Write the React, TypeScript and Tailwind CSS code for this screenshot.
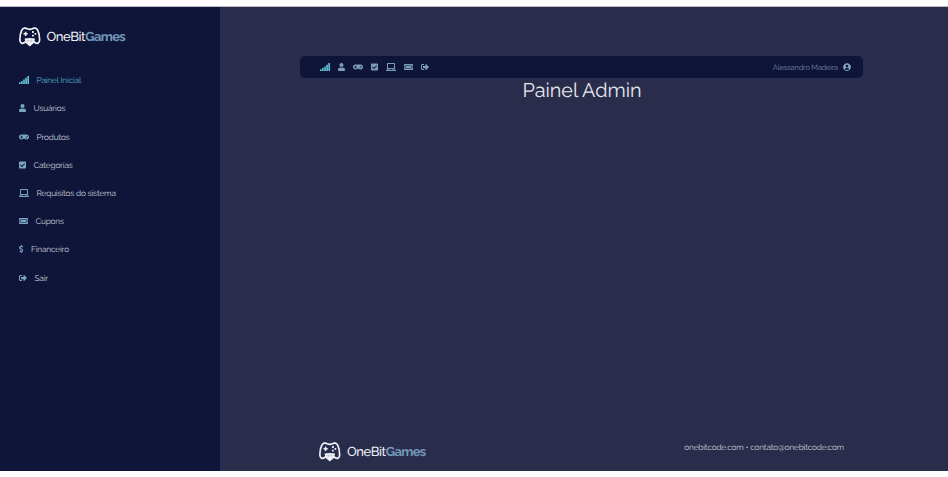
import type { ReactNode } from "react";
import {
  FaUser, FaGamepad, FaCheckSquare, FaLaptop, FaTicketAlt,
  FaDollarSign, FaSignOutAlt, FaUserCircle,
} from "react-icons/fa";

function Signal() {
  return (
    <svg viewBox="0 0 10 8" className="h-2 w-2.5 text-[#62c6d8]" fill="currentColor">
      <path d="M0 6.200h1.600V8H0zM2.100 5h1.600v3H2.100zM4.200 3.400h1.600V8H4.200zM6.300 1.700h1.600V8H6.300zM8.400 0H10v8H8.400z" />
    </svg>
  );
}

const menu: { label: string; icon: ReactNode; text: string }[] = [
  { label: "Painel Inicial", icon: <Signal />, text: "text-[#4fb4c9]" },
  { label: "Usuários", icon: <FaUser className="h-2 w-[7px]" />, text: "text-[#cccedb]" },
  { label: "Produtos", icon: <FaGamepad className="h-2 w-2.5" />, text: "text-[#cccedb]" },
  { label: "Categorias", icon: <FaCheckSquare className="h-2 w-[7px]" />, text: "text-[#cccedb]" },
  { label: "Requisitos do sistema", icon: <FaLaptop className="h-2 w-2.5" />, text: "text-[#cccedb]" },
  { label: "Cupons", icon: <FaTicketAlt className="h-2 w-[9px]" />, text: "text-[#cccedb]" },
  { label: "Financeiro", icon: <FaDollarSign className="h-2 w-[4.5px]" />, text: "text-[#cccedb]" },
  { label: "Sair", icon: <FaSignOutAlt className="h-2 w-2" />, text: "text-[#cccedb]" },
];

function Logo() {
  return (
    <div className="flex items-start gap-[6px]">
      <svg viewBox="0 0 22 20" className="h-5 w-[22px] shrink-0" fill="none">
        <path
          d="M6.800 14.300 5.300 15.800C3.300 17 1 16.300 .9 13.300 .8 9.800 1.400 6 2.700 3.300 3.900.900 6.300.5 8.200 1.800Q11 2.900 13.300 1.800C15.200.5 17.600.900 18.800 3.300 20.100 6 20.700 9.800 20.600 13.300 20.500 16.300 18.200 17 16.200 15.800L14.700 14.300"
          stroke="#f1f2f7" strokeWidth="1.700" strokeLinejoin="round"
        />
        <path d="M4.500 6.800h4.200M6.600 4.700v4.200" stroke="#f1f2f7" strokeWidth="1.500" />
        <path d="M13.900 4v1.900M13.900 7.700v1.900M16.400 5.900v1.900" stroke="#f1f2f7" strokeWidth="1.700" />
        <path d="M5.600 11.500Q10.800 10.300 16 11.500L15.100 15.700 10.800 19.500 6.500 15.700Z" fill="#f1f2f7" />
        <path d="M7 13.700h7.600M9.300 11.700v3.800M12.300 11.700v3.800" stroke="#8d93ad" strokeWidth=".3" />
      </svg>
      <span className="pt-px text-[13px] leading-5 font-medium tracking-[-0.43px] whitespace-nowrap text-[#eeeff5]">
        OneBit<span className="font-bold tracking-[-0.65px] text-[#7199bb]">Games</span>
      </span>
    </div>
  );
}

export default function App() {
  return (
    <div className="h-[477px] w-[948px] overflow-hidden bg-white pt-[6px] font-[Raleway,Lato,sans-serif] [text-rendering:geometricPrecision]">
      <div className="flex h-[465px] border-t border-[#b9bac4] bg-[#292c4b]">
        <aside className="w-[220px] shrink-0 bg-[#0f1539] pt-5 pl-[18.5px]">
          <Logo />
          <nav className="mt-[18.1px] flex flex-col text-[#7ba4c0]">
            {menu.map((m) => (
              <a key={m.label} className="flex h-[28.2px] items-center gap-2">
                {m.icon}
                <span className={`text-[8.2px] leading-3 tracking-[-0.14px] whitespace-nowrap ${m.text}`}>{m.label}</span>
              </a>
            ))}
          </nav>
        </aside>
        <main className="flex flex-1 flex-col pt-[49px] pr-[85px] pl-20">
          <header className="flex h-[22px] items-center justify-between rounded-[5px] bg-[#0f1539] pr-3 pl-5 text-[#7c9dba]">
            <div className="flex items-center gap-2">
              <Signal />
              <FaUser className="h-2 w-[7px]" />
              <FaGamepad className="h-2 w-2.5" />
              <FaCheckSquare className="h-2 w-[7px]" />
              <FaLaptop className="h-2 w-2.5" />
              <FaTicketAlt className="h-2 w-[9px]" />
              <FaSignOutAlt className="h-2 w-2" />
            </div>
            <div className="flex items-center gap-[5px]">
              <span className="pt-px text-[7.6px] leading-3 tracking-[-0.25px] text-[#7186a6]">Alessandro Madeira</span>
              <FaUserCircle className="h-2 w-2 text-[#85a9c7]" />
            </div>
          </header>
          <h1 className="pl-px text-center text-[19.8px] leading-6 text-[#e6e7ee]">Painel Admin</h1>
          <footer className="mt-auto flex items-start justify-between pr-[19px] pb-2 pl-[19px]">
            <Logo />
            <span className="text-[8.2px] leading-[11px] tracking-[-0.15px] text-[#c9cbd8]">onebitcode.com • contato@onebitcode.com</span>
          </footer>
        </main>
      </div>
    </div>
  );
}
